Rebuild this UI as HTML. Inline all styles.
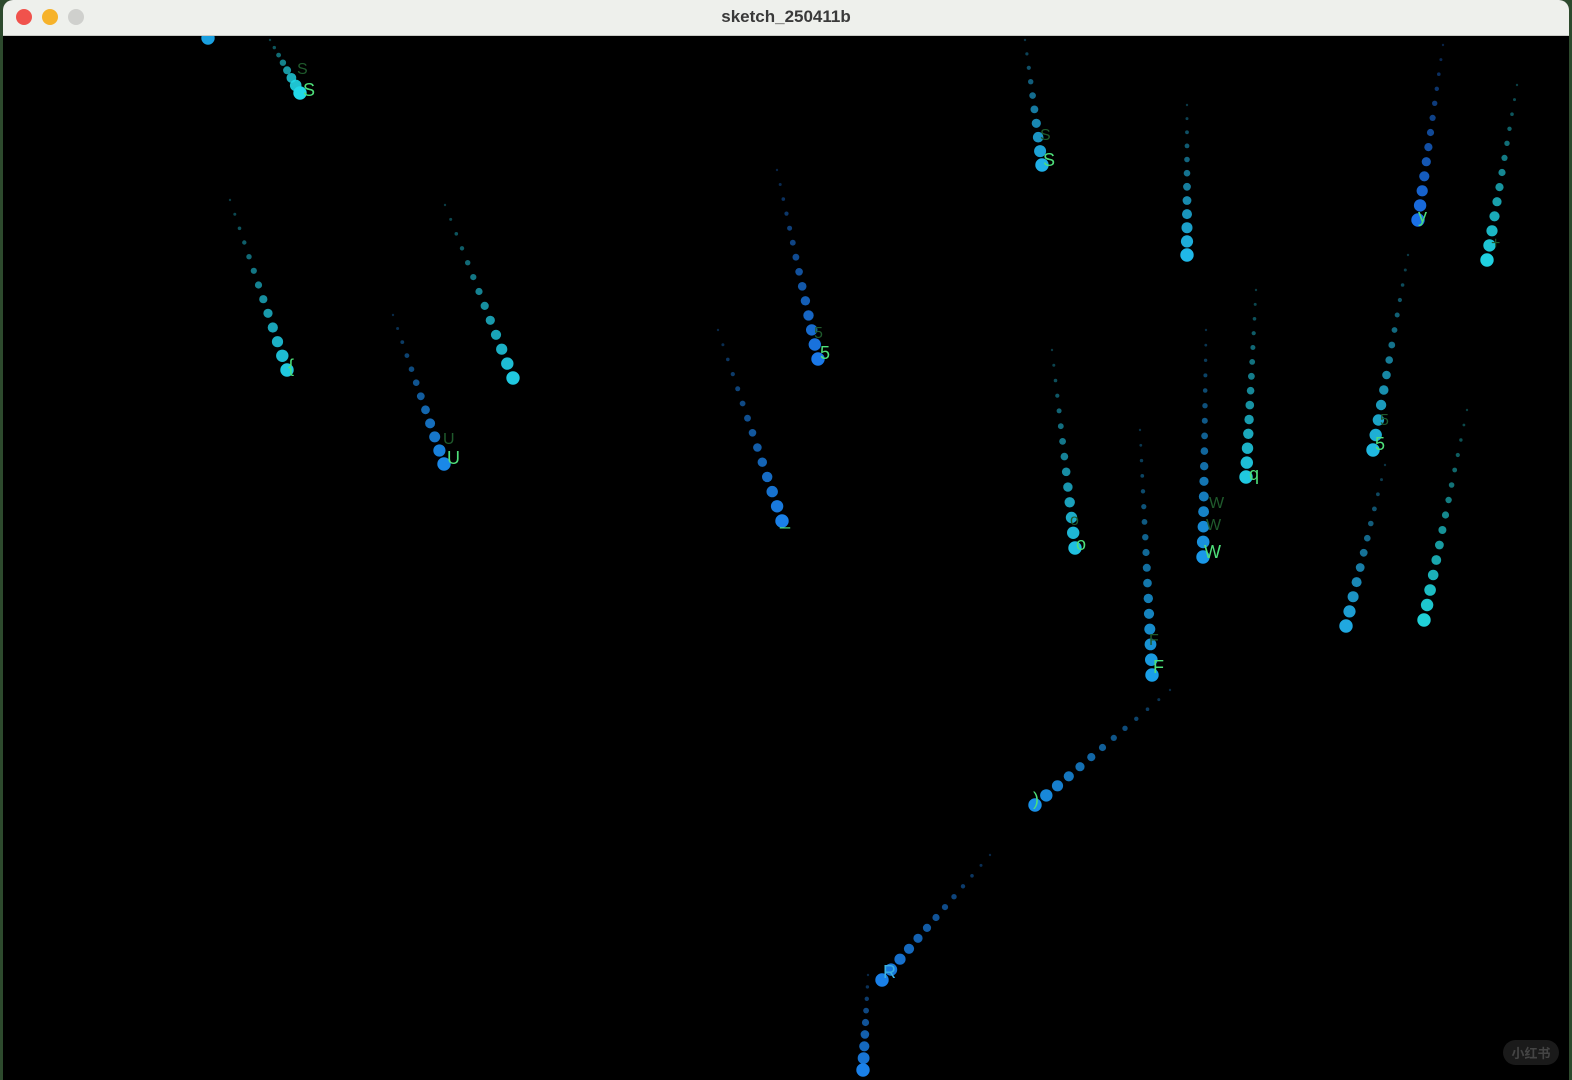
<!DOCTYPE html>
<html><head><meta charset="utf-8"><style>
html,body{margin:0;padding:0;width:1572px;height:1080px;overflow:hidden;background:#2d4a2d;}
#win{position:absolute;left:3px;top:0;width:1566px;height:1080px;background:#000;border-radius:10px 10px 0 0;overflow:hidden;}
#bar{position:absolute;left:0;top:0;width:100%;height:35px;background:#eef0ec;border-bottom:1px solid #c9cbc6;}
#bar .t{position:absolute;left:0;right:0;top:7px;text-align:center;font:bold 17px "Liberation Sans",sans-serif;color:#3a3a3a;}
.dot{position:absolute;top:9px;width:16px;height:16px;border-radius:50%;}
#cv{position:absolute;left:0;top:36px;}
#wm{position:absolute;left:1500px;top:1040px;width:56px;height:25px;border-radius:13px;background:#1a1a1a;color:#444;font:bold 13px "Noto Sans CJK SC",sans-serif;text-align:center;line-height:25px;}
</style></head><body>
<div id="win">
<div id="bar"><div class="dot" style="left:13px;background:#f0524c"></div><div class="dot" style="left:39px;background:#f6b22a"></div><div class="dot" style="left:65px;background:#cfd0cd"></div><div class="t">sketch_250411b</div></div>
<svg id="cv" width="1566" height="1044" viewBox="3 36 1566 1044" xmlns="http://www.w3.org/2000/svg" font-family="Liberation Sans, sans-serif" font-size="18">
<g id="dots"></g>
<g fill="#4ee07a">
<text x="303" y="96">S</text><text x="288" y="372">{</text><text x="447" y="464">U</text>
<text x="820" y="359">5</text><text x="780" y="525">_</text><text x="1043" y="166">S</text>
<text x="1418" y="222">y</text><text x="1076" y="550">o</text><text x="1204" y="558">W</text>
<text x="1249" y="480">q</text><text x="1375" y="450">5</text><text x="1153" y="673">F</text>
<text x="1033" y="805">)</text><text x="883" y="978" fill="#3ab0e0">R</text>
</g>
<g fill="#1f5a2c" font-size="16">
<text x="297" y="74">S</text><text x="814" y="338">5</text><text x="1206" y="530">W</text><text x="1209" y="508">W</text><text x="1149" y="645">F</text><text x="1070" y="525">o</text><text x="443" y="444">U</text><text x="1380" y="425">5</text><text x="1040" y="140">S</text><text x="1491" y="248">+</text>
</g>
</svg>
<div id="wm">小红书</div>
</div>
<script>
var T=[
[270,40,300,93,8,'#22d8e8'],[208,38,208,38,1,'#1aa0e0'],
[230,200,287,370,13,'#20c8e0'],[445,205,513,378,13,'#20c8e0'],
[393,315,444,464,12,'#1a88e8'],[777,170,818,359,14,'#1a78e8'],
[718,330,782,521,14,'#1a80e8'],[1025,40,1042,165,10,'#20b0e8'],
[1187,105,1187,255,12,'#20b8e8'],[1443,45,1418,220,13,'#1a70e8'],
[1517,85,1487,260,13,'#20d0e0'],[1052,350,1075,548,14,'#20c0e0'],
[1206,330,1203,557,16,'#1a98e8'],[1256,290,1246,477,14,'#20c8e0'],
[1408,255,1373,450,14,'#20b8e0'],[1385,465,1346,626,12,'#20a8e0'],
[1140,430,1152,675,17,'#1aa0e8'],[1467,410,1424,620,15,'#20d0d8'],
[1170,690,1035,805,13,'#1a90e8'],[990,855,882,980,13,'#1a80e8'],
[868,975,863,1070,9,'#1a80e8']];
var g=document.getElementById('dots'),s='';
T.forEach(function(t){var n=t[4];for(var i=0;i<n;i++){var f=n==1?1:i/(n-1);
var x=t[0]+(t[2]-t[0])*f,y=t[1]+(t[3]-t[1])*f,r=1.2+5.5*Math.pow(f,1.2),o=0.3+0.7*f;
s+='<circle cx="'+x.toFixed(1)+'" cy="'+y.toFixed(1)+'" r="'+r.toFixed(1)+'" fill="'+t[5]+'" opacity="'+o.toFixed(2)+'"/>';}});
g.innerHTML=s;
</script>
</body></html>
